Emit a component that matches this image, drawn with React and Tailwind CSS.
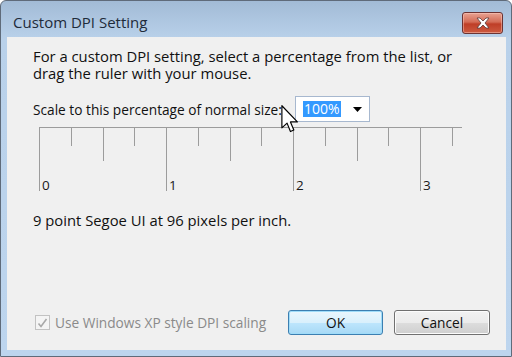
import React from "react";

const F = { fontFamily: '"Open Sans", "Noto Sans", sans-serif' };

function Ruler() {
  const minors = [
    [31.75, 19], [63.5, 34], [95.25, 19],
    [158.75, 19], [190.5, 34], [222.25, 19],
    [285.75, 19], [317.5, 34], [349.25, 19],
    [412.75, 19],
  ];
  const majors = [0, 127, 254, 381];
  return (
    <svg width="424" height="66" className="block">
      <line x1="0" y1="0.5" x2="423" y2="0.5" stroke="#9c9c9c" />
      {majors.map((x) => (
        <line key={x} x1={Math.round(x) + 0.5} y1="0" x2={Math.round(x) + 0.5} y2="64" stroke="#9c9c9c" />
      ))}
      {minors.map(([x, h]) => (
        <line key={x} x1={Math.round(x) + 0.5} y1="0" x2={Math.round(x) + 0.5} y2={h} stroke="#9c9c9c" />
      ))}
      {["0", "1", "2", "3"].map((t, i) => (
        <text key={t} x={majors[i] + 3} y="63" fontSize="13.5" fill="#1a1a1a" style={F}>
          {t}
        </text>
      ))}
    </svg>
  );
}

export default function App() {
  return (
    <div
      className="relative w-[512px] h-[357px] flex flex-col rounded-t-[6px] border border-[#5f6b7a] bg-[linear-gradient(to_bottom,#a2bbd6,#b9d1ea_38px,#bdd5ee)] overflow-hidden"
      style={F}
    >
      {/* Title bar */}
      <div className="h-[36px] flex items-start shrink-0">
        <div className="pl-[12px] pt-[12px] text-[15px] leading-[18px] text-[#1e2b3a]">Custom DPI Setting</div>
        <div className="ml-auto mr-[8px] mt-[11px] w-[41px] h-[22px] rounded-[3px] border border-[#6b3333] bg-[linear-gradient(to_bottom,#e8a292,#d46c56_45%,#bf3e27_55%,#cc5a40)] flex items-center justify-center shadow-[inset_0_0_0_1px_rgba(255,210,200,0.45)]">
          <svg width="16" height="12" viewBox="0 0 16 12">
            <path d="M2 1 L5 1 L8 4 L11 1 L14 1 L10 6 L14 11 L11 11 L8 8 L5 11 L2 11 L6 6 Z" fill="#fff" stroke="#5a3a3a" strokeWidth="0.8" strokeLinejoin="round" />
          </svg>
        </div>
      </div>

      {/* Client area */}
      <div className="ml-[6px] mr-[5px] mb-[6px] flex-1 bg-[#f0f0f0] flex flex-col text-[#111]">
        <div className="pl-[26px] pt-[11px] text-[14.8px] leading-[17px]">
          <div>For a custom DPI setting, select a percentage from the list, or</div>
          <div>drag the ruler with your mouse.</div>
        </div>

        <div className="ml-[26px] mt-[14px] flex items-center">
          <span className="w-[262px] pt-[1px] text-[13.7px] leading-[17px]">Scale to this percentage of normal size:</span>
          <div className="w-[75px] h-[26px] bg-white border border-[#a7b8cf] flex items-center pl-[7px] pr-[7px]">
            <span className="bg-[#3399ff] text-white px-[1px] text-[14px] leading-[16px]">100%</span>
            <svg className="ml-auto" width="9" height="5" viewBox="0 0 9 5">
              <path d="M0 0 L9 0 L4.5 5 Z" fill="#000" />
            </svg>
          </div>
        </div>

        <div className="ml-[32px] mt-[5px]">
          <Ruler />
        </div>

        <div className="pl-[26px] mt-[19px] text-[14.8px] leading-[17px]">9 point Segoe UI at 96 pixels per inch.</div>

        <div className="flex-1" />

        <div className="flex items-center pb-[15px] pl-[28px] pr-[16px] text-[13.7px] leading-[17px]">
          <div className="flex items-center text-[#8a8a8a]">
            <div className="w-[15px] h-[15px] border border-[#c2c2c2] bg-[#f4f4f4] flex items-center justify-center">
              <svg width="11" height="10" viewBox="0 0 11 10">
                <path d="M1.5 5.5 L4 8.5 L9.5 1" fill="none" stroke="#a8a8a8" strokeWidth="1.6" />
              </svg>
            </div>
            <span className="ml-[5px]">Use Windows XP style DPI scaling</span>
          </div>
          <div className="ml-auto flex gap-[11px]">
            <div className="w-[95px] h-[25px] rounded-[3px] border border-[#3c7fb1] bg-[linear-gradient(to_bottom,#eaf6fd,#d9f0fc_50%,#bee6fd_50%,#a7d9f5)] shadow-[inset_0_0_0_1px_#9fdcf9] flex items-center justify-center text-[#111]">
              OK
            </div>
            <div className="w-[96px] h-[25px] rounded-[3px] border border-[#707070] bg-[linear-gradient(to_bottom,#f2f2f2,#ebebeb_50%,#dddddd_50%,#cfcfcf)] shadow-[inset_0_0_0_1px_#fcfcfc] flex items-center justify-center text-[#111]">
              Cancel
            </div>
          </div>
        </div>
      </div>

      {/* Mouse cursor */}
      <svg className="absolute left-[280px] top-[104px]" width="18" height="28" viewBox="0 0 12 19">
        <path d="M0.5 0.5 L0.5 15.5 L4 12.3 L6.3 18 L8.6 17 L6.3 11.5 L11 11.5 Z" fill="#fff" stroke="#000" strokeWidth="0.8" strokeLinejoin="round" />
      </svg>
    </div>
  );
}
